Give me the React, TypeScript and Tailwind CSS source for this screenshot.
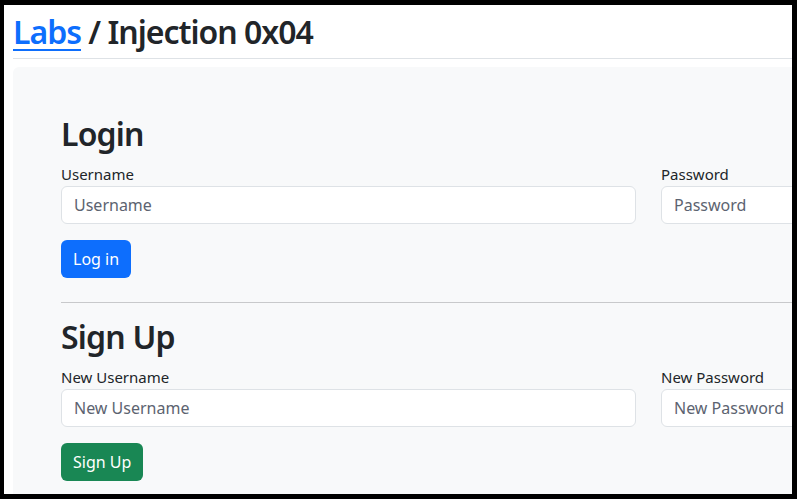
import React from "react"

const font = { fontFamily: '"Noto Sans", "Open Sans", sans-serif' }

function Field({ label, placeholder }: { label: string; placeholder: string }) {
  return (
    <div className="w-[575px] shrink-0">
      <label className="block text-[15px] leading-[22px] text-[#212529] mb-px">{label}</label>
      <input
        type="text"
        placeholder={placeholder}
        className="block w-full h-[38px] px-3 text-[16px] bg-white border border-[#dee2e6] rounded-md text-[#212529] placeholder:text-[#5c6370] outline-none"
      />
    </div>
  )
}

function Section({
  title,
  fields,
  button,
  color,
}: {
  title: string
  fields: [string, string][]
  button: string
  color: string
}) {
  return (
    <div>
      <h2 className="text-[32px] leading-[38px] font-semibold tracking-[-0.8px] text-[#212529] mb-[10px]">
        {title}
      </h2>
      <div className="flex gap-[25px]">
        {fields.map(([l, p]) => (
          <Field key={l} label={l} placeholder={p} />
        ))}
      </div>
      <button className={"mt-4 h-[38px] px-3 rounded-md text-white text-[16px] " + color}>{button}</button>
    </div>
  )
}

export default function App() {
  return (
    <div
      className="w-[797px] h-[499px] overflow-hidden bg-white border-black border-l-4 border-t-[5px] border-r-[5px] border-b-[5px]"
      style={font}
    >
      <div className="pl-[9px] pt-[8px]">
        <h1 className="text-[32px] leading-[38px] font-semibold tracking-[-1px] text-[#212529] whitespace-nowrap">
          <a href="#" className="text-[#0d6efd] underline underline-offset-[5px] decoration-2">
            Labs
          </a>{" "}
          / Injection 0x04
        </h1>
        <div className="mt-[7px] h-px w-[1300px] bg-[#dee2e6]" />
        <div className="mt-2 w-[1300px] rounded-md bg-[#f8f9fa] p-12">
          <Section
            title="Login"
            fields={[
              ["Username", "Username"],
              ["Password", "Password"],
            ]}
            button="Log in"
            color="bg-[#0d6efd]"
          />
          <div className="mt-6 mb-[15px] h-px bg-[#c8c9cb]" />
          <Section
            title="Sign Up"
            fields={[
              ["New Username", "New Username"],
              ["New Password", "New Password"],
            ]}
            button="Sign Up"
            color="bg-[#198754]"
          />
        </div>
      </div>
    </div>
  )
}
